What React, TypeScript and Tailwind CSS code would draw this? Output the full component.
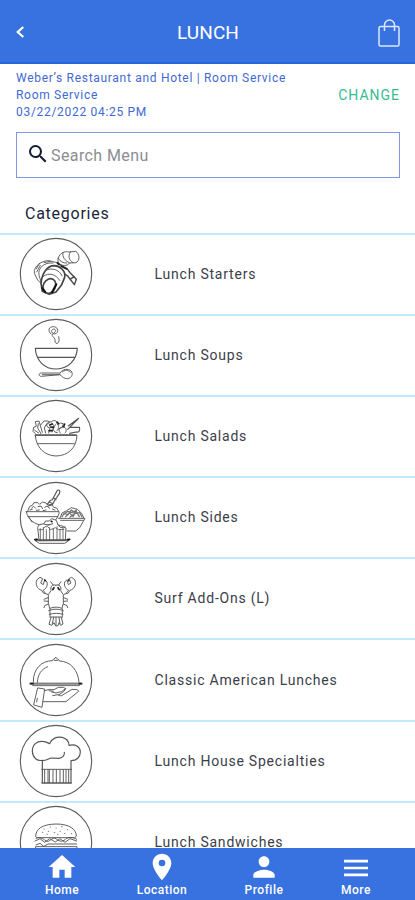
import type { ReactNode } from 'react';
import { MdHome, MdLocationOn, MdPerson, MdSearch } from 'react-icons/md';

function Medallion({ children }: { children: ReactNode }) {
  return (
    <svg
      viewBox="28 14 222 222"
      className="h-[74px] w-[74px] shrink-0"
      fill="none"
      stroke="#555"
      strokeWidth="2.8"
      strokeLinecap="round"
      strokeLinejoin="round"
    >
      <circle cx="139" cy="125" r="107" stroke="#5c5c5c" strokeWidth="3.4" />
      {children}
    </svg>
  );
}

const starters = (
  <g transform="translate(0 -7)">
    <path d="M146 84C151 68 164 63 178 66L198 64C211 71 211 93 199 98L179 99C175 109 153 109 147 98C144 94 145 89 146 84Z" fill="#fff" />
    <path d="M160 68C157 80 165 92 179 98M183 65C174 76 177 92 190 98M147 87C151 95 162 100 171 99" />
    <path d="M137 97L118 92C97 91 71 108 74 130L84 150L94 160M130 99C102 96 84 115 88 136L95 158" />
    <path d="M139 97L149 106" />
    <path d="M80 116L90 100M81 126L92 106M103 98L122 94" />
    <path d="M145 101L172 116L182 129L200 148L194 164L174 138L158 127M184 146L194 140" fill="#fff" strokeWidth="4" stroke="#444" />
    <path d="M134 107C151 108 169 123 165 142L155 166L139 186L119 193L98 184L94 160C97 130 112 107 134 107Z" fill="#fff" strokeWidth="5" stroke="#444" />
    <path d="M108 121C129 111 150 121 157 137M101 139C118 126 139 133 150 151" />
    <ellipse cx="119" cy="168" rx="18" ry="23" transform="rotate(28 119 168)" fill="#fff" strokeWidth="5" stroke="#444" />
    <path d="M98 174L107 186M127 187L140 163" stroke="#111" strokeWidth="6" />
    <path d="M143 98L148 103M155 109L171 117" stroke="#222" strokeWidth="5" />
  </g>
);

const soup = (
  <g>
    <path d="M77 105H203C201 140 177 166 140 167C104 167 79 142 77 105ZM84 132H194" strokeWidth="3.5" />
    <path d="M124 62C112 50 119 40 131 40C143 40 149 53 140 60C132 66 121 56 128 49C133 44 142 50 136 56C128 63 124 65 132 72C140 79 133 87 139 90C147 92 150 84 147 70" />
    <path d="M151 179H95C86 179 86 189 95 189L151 184M151 179C159 166 176 165 184 173C192 181 186 194 174 196C165 197 156 190 151 184M158 176C164 169 176 169 182 177M98 184H147" />
  </g>
);

const salad = (
  <g>
    <path d="M77 123H202C200 161 176 184 139 185C104 184 79 159 77 123ZM83 148H194" />
    <path d="M78 122H199" strokeWidth="5" strokeDasharray="6 4" />
    <path d="M77 118L70 111L72 99L80 96L77 82L88 80L92 93L103 80H116L120 85L109 91L104 101L108 116M86 88L84 101L94 118M92 94L98 114M75 108L87 116" />
    <path d="M111 94C111 80 121 83 125 82C136 74 143 82 142 89C151 94 146 105 141 110M112 96L121 103L117 116M125 86L133 94L127 113M138 91C127 97 129 116 143 115M145 91L153 86L161 88L158 99L147 104M153 117C143 109 149 98 160 98C170 98 173 111 166 116" />
    <path d="M120 92L128 89M122 98L132 99M118 109L127 109M142 83L146 87M165 89L162 97" stroke="#222" strokeWidth="5" />
    <path d="M174 105L207 72L201 76L176 95M181 99L209 99C213 108 207 115 199 113L180 117" strokeWidth="3.5" />
  </g>
);

const sides = (
  <g>
    <path d="M50 106H148V112C139 137 123 147 99 147C76 145 54 130 50 106ZM55 121H144M59 124L67 137" />
    <path d="M54 105L60 90L68 87L73 79H85L90 84L98 77L109 80L114 86L126 84L132 93L141 95L147 105M66 95L72 90L78 96M85 91L94 89L99 97M105 93L112 89L120 96M128 98L136 101M61 101L68 99M80 102L89 101M100 103L109 101" />
    <path d="M113 84L121 73L128 70L143 42C149 39 153 44 149 52L134 74L128 85L116 89M132 65L139 70M120 78L127 81" strokeWidth="3.5" />
    <path d="M147 126H226L210 154L198 164H172M153 132H221M151 126L157 110L171 103L185 94L203 99L216 111L222 124" />
    <path d="M157 121L164 110L174 116L185 101L198 111L210 109L217 122M168 121L179 109L190 121L199 104L209 121M160 116L174 105L188 109L201 101M181 122L195 112" stroke="#777" strokeWidth="4" />
    <path d="M88 192L84 153L89 145L103 142L108 134H119L126 127L140 132L145 146L161 150L169 155L167 191ZM103 143L116 147L129 142M145 146L153 154L166 152" fill="#fff" />
    <path d="M92 157V190M101 153V190M110 160V190M120 154V190M131 157V190M142 151V190M151 159V190M160 155V190M88 160H99L106 151H114L123 160L137 154L147 160L163 159" stroke="#666" />
    <path d="M74 190H180M78 193H177L165 201H90Z" />
    <path d="M76 190L82 189M174 190L180 189M125 135L127 136" stroke="#111" strokeWidth="5" />
  </g>
);

function LobsterSide() {
  return (
    <g>
      <path d="M114 111L101 107L96 99C81 95 76 78 82 67L91 60L99 64L93 77L101 82L105 67L112 74C115 88 107 96 100 99L107 107M115 121L103 126M115 132L103 131M116 140L105 145L103 151" />
      <path d="M139 84C128 78 121 89 124 100L116 112V138L120 153M131 84L123 73" />
    </g>
  );
}

const lobster = (
  <g>
    <LobsterSide />
    <g transform="translate(277 0) scale(-1 1)">
      <LobsterSide />
    </g>
    <path d="M121 153C133 148 146 148 157 153M117 160C131 154 147 154 161 160M119 171C132 167 148 167 160 171M123 179H155M121 156V180M158 156V180" />
    <path d="M124 180L118 201L127 204L133 196L138 206L145 205L148 196L153 204L160 200L155 180M132 180L128 199M139 180V204M148 180L151 199" />
    <path d="M105 68L107 70M177 68V70M133 91L129 97M145 91L149 97" stroke="#222" strokeWidth="5" />
  </g>
);

const cloche = (
  <g>
    <path d="M71 132C69 93 95 67 129 67C128 61 137 63 138 56C140 63 149 61 149 68C182 68 206 96 208 132M83 132C84 109 95 92 114 85M134 66H144" />
    <path d="M62 134H216L209 142H70Z" fill="#999" strokeWidth="2" />
    <path d="M62 136H70M209 136H216" stroke="#222" strokeWidth="5" />
    <path d="M85 149L105 152L97 207L73 200ZM105 157L116 154H133L146 147H161L168 151L155 160L139 164L126 161M129 172L145 169L154 173L187 153L203 154L207 159L187 175L169 190H101M146 170L162 160L168 151M81 191L83 180M118 157L131 159" />
  </g>
);

const chef = (
  <g>
    <path d="M98 191V123C83 126 69 116 68 96C68 75 82 65 98 66C107 66 114 70 120 73C126 57 142 51 157 54C169 57 178 66 178 78C199 73 212 84 212 98C212 113 201 124 184 124V191ZM98 123C111 126 117 117 125 116L147 117C159 117 165 108 164 99" strokeWidth="3.5" />
    <path d="M96 150H186M96 191H186M105 151V190M115 151V190M119 151V190M130 151V190M140 151V190M151 151V190M161 151V190M169 151V190M177 151V190" />
  </g>
);

const burger = (
  <g>
    <path d="M78 108C78 86 97 72 139 71C180 71 200 87 200 108L195 112H83Z" />
    <path d="M103 86H104M122 80H123M139 83H140M156 79H157M173 88H174M98 96H99M116 93H117M134 97H135M151 93H152M165 99H166M185 100H186M112 102H113M144 102H145" stroke="#888" strokeWidth="3.5" />
    <path d="M79 114C89 108 99 114 109 122C120 128 127 108 139 115C151 126 162 124 169 115C180 108 196 112 201 117M76 122L91 115L105 126L120 115L137 125L151 115L166 126L181 115L201 122M79 134L91 129L102 138L115 131H201M79 139H202V150C199 171 185 178 164 179H114C94 178 79 167 78 150Z" />
  </g>
);

const categories = [
  { name: 'Lunch Starters', art: starters },
  { name: 'Lunch Soups', art: soup },
  { name: 'Lunch Salads', art: salad },
  { name: 'Lunch Sides', art: sides },
  { name: 'Surf Add-Ons (L)', art: lobster },
  { name: 'Classic American Lunches', art: cloche },
  { name: 'Lunch House Specialties', art: chef },
  { name: 'Lunch Sandwiches', art: burger },
];

export default function App() {
  return (
    <div className="flex h-[900px] w-[415px] flex-col overflow-hidden bg-white font-['Roboto',sans-serif] text-[#20243a]">
      <header className="flex h-16 shrink-0 items-center justify-between border-b-2 border-[#2866d8] bg-[#3871e0] pr-[14px] pl-[15px] text-white">
        <svg viewBox="0 0 12 16" className="mt-0.5 h-4 w-[27px] pr-4" fill="none" stroke="currentColor" strokeWidth="2.4">
          <path d="M9 2.5L3 8L9 13.5" />
        </svg>
        <h1 className="-ml-[3px] pt-[3px] text-[19px] leading-6 tracking-[0.1px]">LUNCH</h1>
        <svg viewBox="0 0 24 30" className="mt-[3px] h-[30px] w-6" fill="none" stroke="#dce8ff" strokeWidth="1.5">
          <rect x="2" y="8.5" width="20" height="19.5" rx="1.5" />
          <path d="M7.5 13V7a5 5 0 0 1 10 0v6" />
        </svg>
      </header>

      <section className="flex h-[68px] shrink-0 items-center justify-between pr-[15px] pl-4">
        <div className="-mt-[5px] text-[12px] leading-[17px] tracking-[0.7px] text-[#4169d3]">
          <p>Weber’s Restaurant and Hotel | Room Service</p>
          <p>Room Service</p>
          <p>03/22/2022 04:25 PM</p>
        </div>
        <button className="-mt-[6px] text-[14px] tracking-[1px] text-[#35bd92]">CHANGE</button>
      </section>

      <label className="mr-[15px] ml-4 flex h-[46px] shrink-0 items-center border border-[#8196e6] pl-[9px] text-[16px] text-[#8b8d92]">
        <MdSearch className="-mt-[3px] h-6 w-6 text-[#151b35]" />
        <span className="pt-0.5 pl-px tracking-[0.4px]">Search Menu</span>
      </label>

      <h2 className="flex h-[54.5px] shrink-0 items-center pt-[17px] pl-[25px] text-[16px] tracking-[0.75px]">Categories</h2>

      <main className="min-h-0 flex-1 overflow-hidden">
        {categories.map(({ name, art }) => (
          <div key={name} className="flex h-[81.2px] items-center border-t-2 border-[#c3eafb] pl-[19px]">
            <Medallion>{art}</Medallion>
            <span className="ml-[61.5px] text-[14px] tracking-[0.78px] text-[#3b3e49]">{name}</span>
          </div>
        ))}
      </main>

      <nav className="flex h-[52px] shrink-0 bg-[#3871e0] pl-[11px] text-[12px] font-medium tracking-[0.5px] text-white">
        <a className="flex w-[102px] flex-col items-center">
          <MdHome className="mt-[3px] h-8 w-8" />
          <span className="-mt-px leading-4">Home</span>
        </a>
        <a className="flex w-[98px] flex-col items-center">
          <MdLocationOn className="mt-[3px] h-8 w-8" />
          <span className="-mt-px leading-4">Location</span>
        </a>
        <a className="flex w-[106px] flex-col items-center">
          <MdPerson className="mt-[3px] h-8 w-8" />
          <span className="-mt-px leading-4">Profile</span>
        </a>
        <a className="flex w-[78px] flex-col items-center">
          <svg viewBox="0 0 26 31" className="mt-[3px] h-[31px] w-[26px]" stroke="currentColor" strokeWidth="2.7">
            <path d="M1 10.2H25M1 17H25M1 23.8H25" />
          </svg>
          <span className="leading-4">More</span>
        </a>
      </nav>
    </div>
  );
}
